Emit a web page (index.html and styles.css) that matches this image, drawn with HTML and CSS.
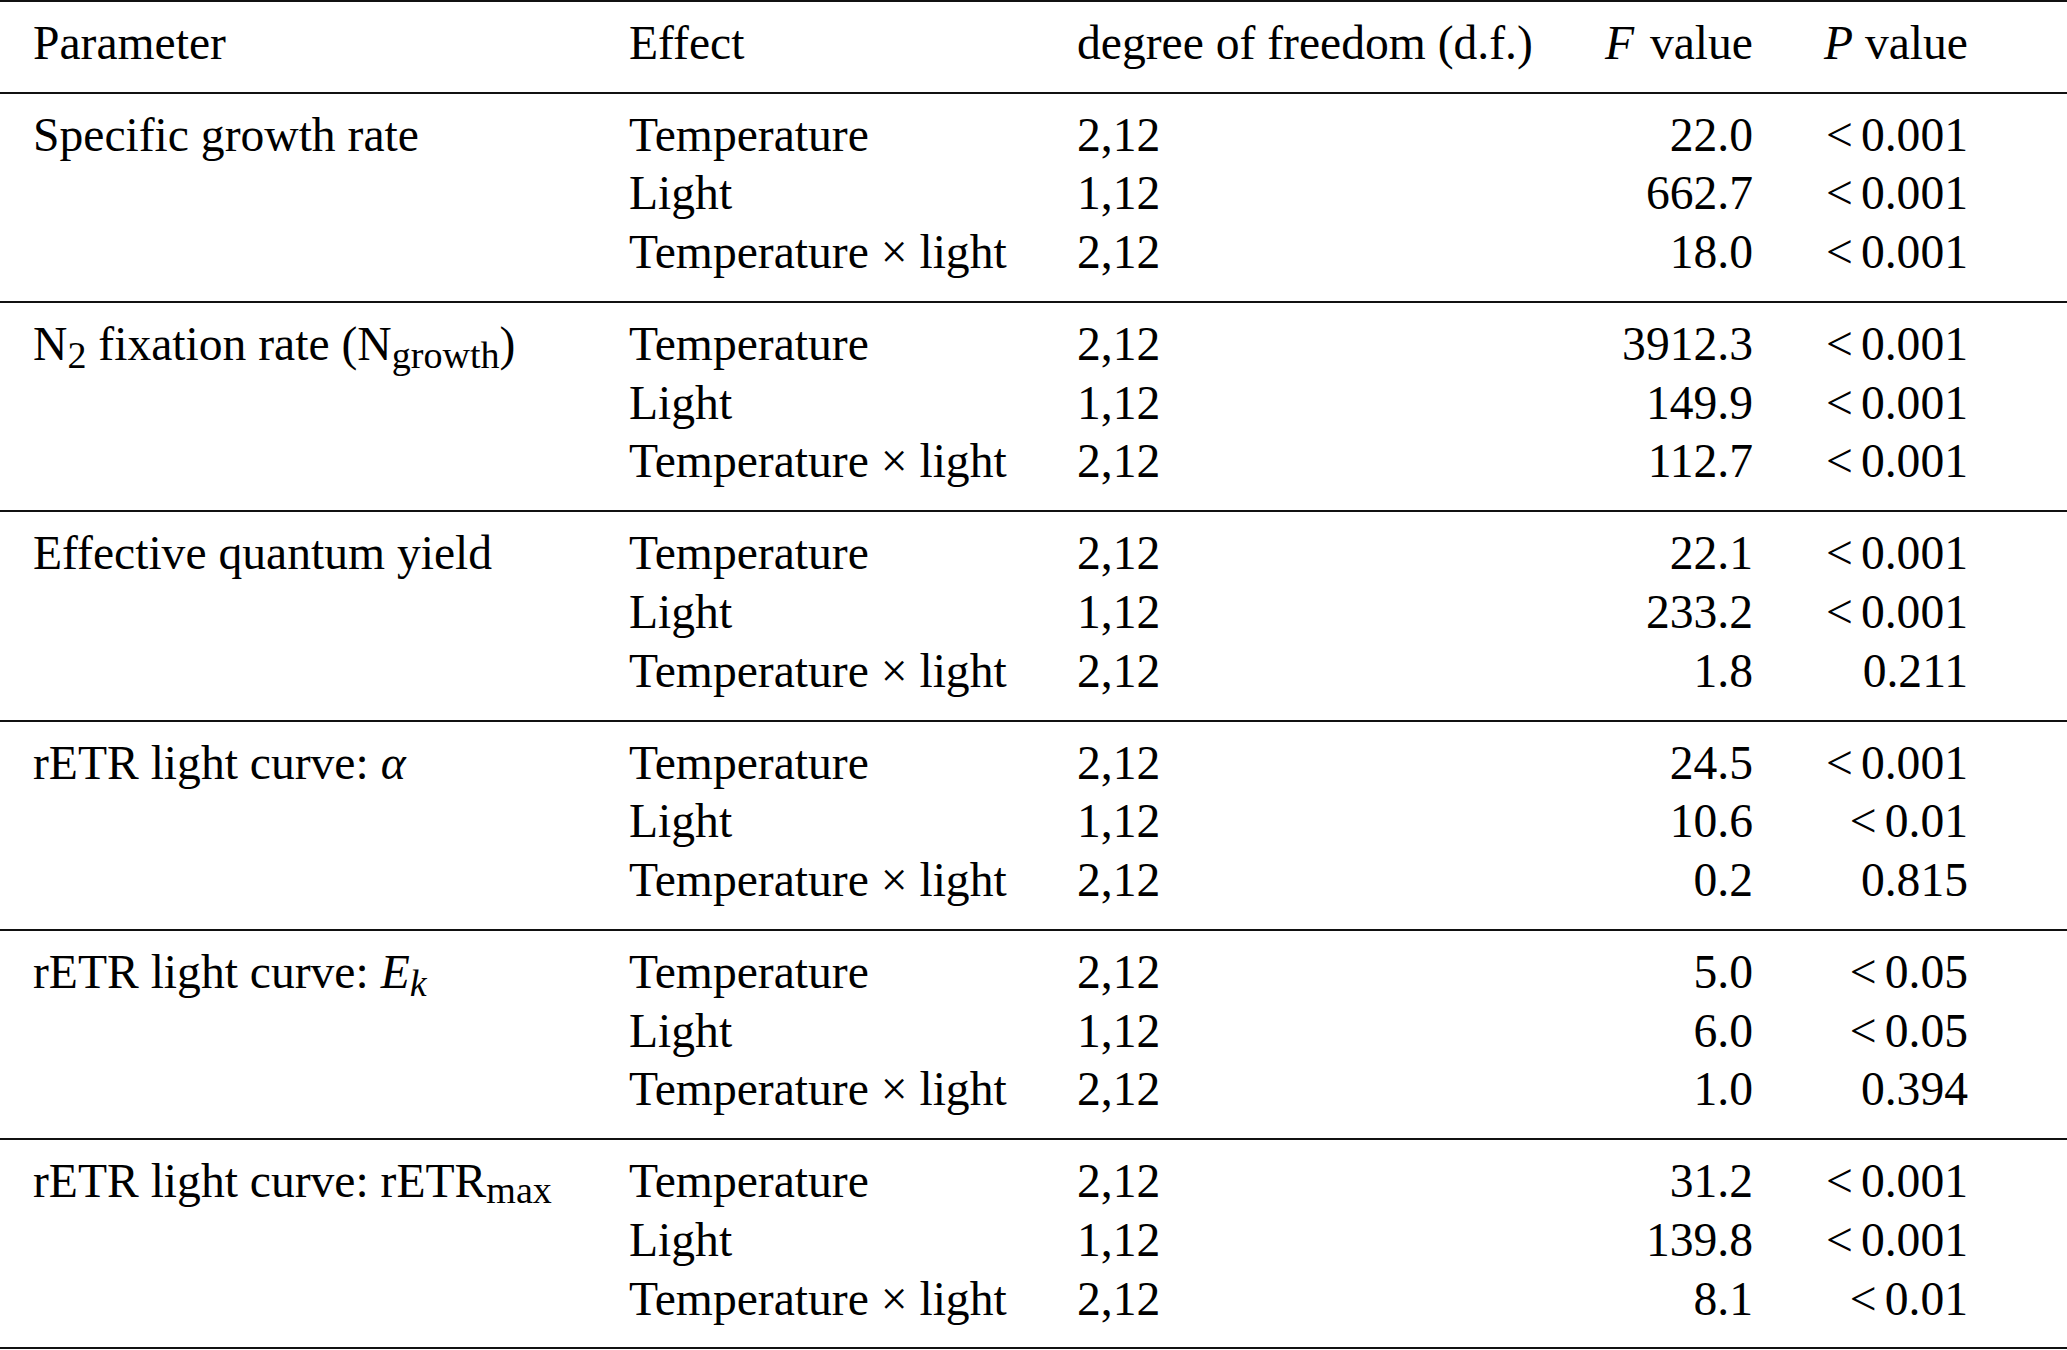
FILE: index.html
```html
<!DOCTYPE html>
<html lang="en">
<head>
<meta charset="utf-8">
<title>ANOVA results</title>
<link rel="stylesheet" href="styles.css">
</head>
<body>
<table class="anova">
  <colgroup>
    <col class="c-param">
    <col class="c-effect">
    <col class="c-df">
    <col class="c-f">
    <col class="c-p">
  </colgroup>
  <thead>
    <tr>
      <th class="param">Parameter</th>
      <th>Effect</th>
      <th>degree of freedom (d.f.)</th>
      <th class="num"><i>F</i>&#8202; value</th>
      <th class="num pcol"><i>P</i> value</th>
    </tr>
  </thead>
  <tbody>
    <tr class="first"><td class="param">Specific growth rate</td><td>Temperature</td><td>2,12</td><td class="num">22.0</td><td class="num pcol"><span class="lt">&lt;</span>0.001</td></tr>
    <tr><td class="param"></td><td>Light</td><td>1,12</td><td class="num">662.7</td><td class="num pcol"><span class="lt">&lt;</span>0.001</td></tr>
    <tr class="last"><td class="param"></td><td>Temperature × light</td><td>2,12</td><td class="num">18.0</td><td class="num pcol"><span class="lt">&lt;</span>0.001</td></tr>
  </tbody>
  <tbody>
    <tr class="first"><td class="param">N<sub>2</sub> fixation rate (N<sub>growth</sub>)</td><td>Temperature</td><td>2,12</td><td class="num">3912.3</td><td class="num pcol"><span class="lt">&lt;</span>0.001</td></tr>
    <tr><td class="param"></td><td>Light</td><td>1,12</td><td class="num">149.9</td><td class="num pcol"><span class="lt">&lt;</span>0.001</td></tr>
    <tr class="last"><td class="param"></td><td>Temperature × light</td><td>2,12</td><td class="num">112.7</td><td class="num pcol"><span class="lt">&lt;</span>0.001</td></tr>
  </tbody>
  <tbody>
    <tr class="first"><td class="param">Effective quantum yield</td><td>Temperature</td><td>2,12</td><td class="num">22.1</td><td class="num pcol"><span class="lt">&lt;</span>0.001</td></tr>
    <tr><td class="param"></td><td>Light</td><td>1,12</td><td class="num">233.2</td><td class="num pcol"><span class="lt">&lt;</span>0.001</td></tr>
    <tr class="last"><td class="param"></td><td>Temperature × light</td><td>2,12</td><td class="num">1.8</td><td class="num pcol">0.211</td></tr>
  </tbody>
  <tbody>
    <tr class="first"><td class="param">rETR light curve: <i>α</i></td><td>Temperature</td><td>2,12</td><td class="num">24.5</td><td class="num pcol"><span class="lt">&lt;</span>0.001</td></tr>
    <tr><td class="param"></td><td>Light</td><td>1,12</td><td class="num">10.6</td><td class="num pcol"><span class="lt">&lt;</span>0.01</td></tr>
    <tr class="last"><td class="param"></td><td>Temperature × light</td><td>2,12</td><td class="num">0.2</td><td class="num pcol">0.815</td></tr>
  </tbody>
  <tbody>
    <tr class="first"><td class="param">rETR light curve: <i>E<sub>k</sub></i></td><td>Temperature</td><td>2,12</td><td class="num">5.0</td><td class="num pcol"><span class="lt">&lt;</span>0.05</td></tr>
    <tr><td class="param"></td><td>Light</td><td>1,12</td><td class="num">6.0</td><td class="num pcol"><span class="lt">&lt;</span>0.05</td></tr>
    <tr class="last"><td class="param"></td><td>Temperature × light</td><td>2,12</td><td class="num">1.0</td><td class="num pcol">0.394</td></tr>
  </tbody>
  <tbody>
    <tr class="first"><td class="param">rETR light curve: rETR<sub class="sub-max">max</sub></td><td>Temperature</td><td>2,12</td><td class="num">31.2</td><td class="num pcol"><span class="lt">&lt;</span>0.001</td></tr>
    <tr><td class="param"></td><td>Light</td><td>1,12</td><td class="num">139.8</td><td class="num pcol"><span class="lt">&lt;</span>0.001</td></tr>
    <tr class="last"><td class="param"></td><td>Temperature × light</td><td>2,12</td><td class="num">8.1</td><td class="num pcol"><span class="lt">&lt;</span>0.01</td></tr>
  </tbody>
</table>
</body>
</html>
```

FILE: styles.css
```css
html, body {
  margin: 0;
  padding: 0;
  background: #ffffff;
}

body {
  font-family: "Liberation Serif", "Times New Roman", serif;
  color: #000000;
}

.anova {
  width: 2067px;
  table-layout: fixed;
  border-collapse: separate;
  border-spacing: 0;
  font-size: 47.6px;
  line-height: 58.7px;
}

.c-param { width: 629px; }
.c-effect { width: 448px; }
.c-df { width: 523px; }
.c-f { width: 153px; }
.c-p { width: 314px; }

.anova th,
.anova td {
  padding: 0;
  font-weight: normal;
  text-align: left;
  white-space: nowrap;
  vertical-align: top;
}

.anova th {
  border-top: 2px solid #111111;
  border-bottom: 2px solid #111111;
  padding-top: 12px;
  padding-bottom: 19px;
}

.anova .param {
  padding-left: 33px;
}

.anova .num {
  text-align: right;
}

.anova .pcol {
  padding-right: 99px;
}

.anova tbody tr.first td {
  padding-top: 12px;
}

.anova tbody tr.last td {
  padding-bottom: 19.2px;
}

.anova tbody + tbody tr.first td {
  border-top: 2px solid #111111;
}

.anova tbody:last-child tr.last td {
  border-bottom: 2px solid #111111;
}

.anova sub {
  font-size: 0.8em;
  line-height: 0;
  vertical-align: -0.21em;
}

.anova sub.sub-max {
  vertical-align: -0.17em;
}

.lt {
  margin-right: 0.17em;
}
```
